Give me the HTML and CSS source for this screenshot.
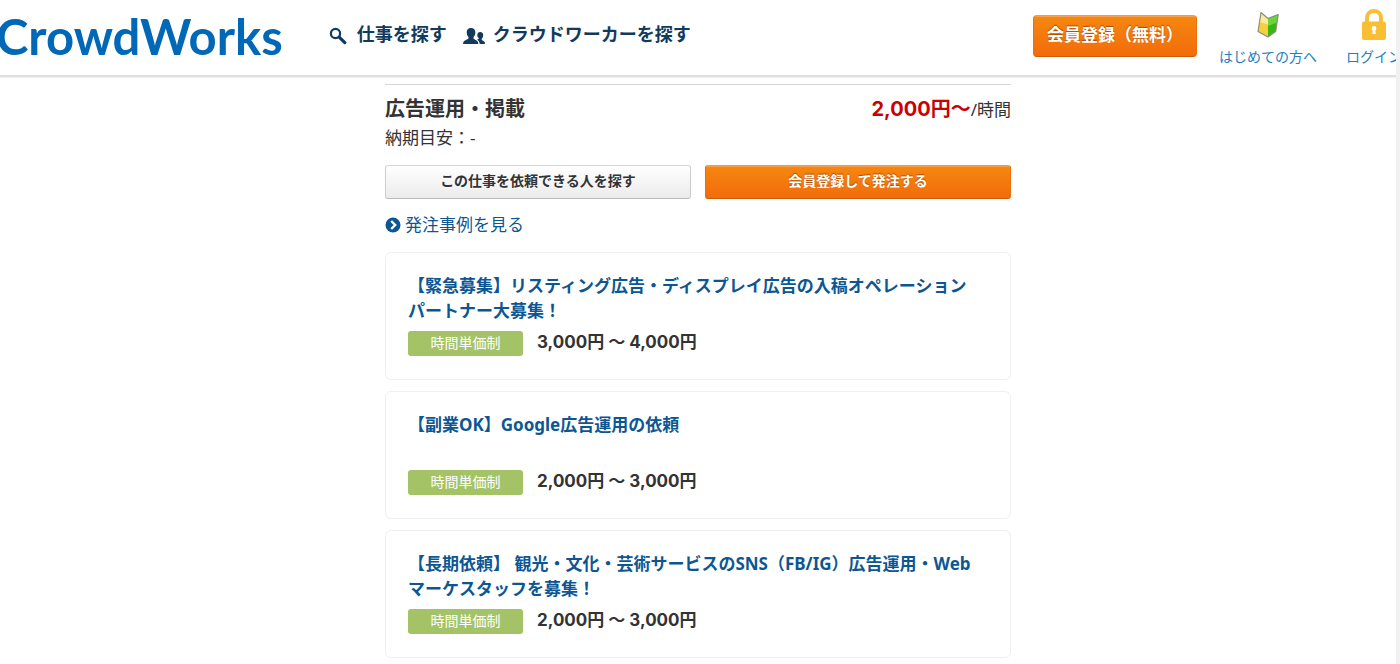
FILE: index.html
```html
<!DOCTYPE html>
<html lang="ja">
<head>
<meta charset="utf-8">
<title>CrowdWorks</title>
<link rel="stylesheet" href="styles.css">
</head>
<body>
<div class="page">
  <header class="header">
    <a class="logo" href="#">CrowdWorks</a>
    <nav class="nav">
      <a class="nav-link" href="#">
        <svg class="nav-search" viewBox="0 0 18 18" aria-hidden="true"><circle cx="6.5" cy="6.5" r="4.6" fill="none" stroke="currentColor" stroke-width="2.2"/><path d="M10.2 10.2l5.6 5.4" stroke="currentColor" stroke-width="3.2" stroke-linecap="round"/></svg>
        仕事を探す</a>
      <a class="nav-link" href="#">
        <svg class="nav-people" viewBox="0 0 22 16" aria-hidden="true"><path fill="currentColor" d="M8 0c2.900 0 4.300 1.700 4.300 4.300 0 2.300-.8 4-1.800 5v1.300c0 .8 4.200 1.500 4.800 4.400.1.600-.1 1-.7 1H.8c-.6 0-.8-.4-.7-1C.7 12.100 5.500 11.400 5.500 10.600V9.300c-1-1-1.800-2.700-1.800-5C3.700 1.700 5.100 0 8 0z"/><path fill="currentColor" d="M17.200 4c2 0 3 1.300 3 3.200 0 1.600-.6 2.800-1.500 3.500v1c0 .6 3 1 3.300 3.300 0 .6-.2 1-.7 1h-4.600c-.1-2.100-1.200-3.500-3-4.400.9-.2 2-.4 2-.9v-.6c-.8-.7-1.400-1.500-1.400-2.900 0-1.900.9-3.200 2.900-3.200z"/></svg>
        クラウドワーカーを探す</a>
    </nav>
    <div class="actions">
      <button class="btn btn-orange btn-signup" type="button">会員登録（無料）</button>
      <a class="action-link" href="#">
        <svg class="icon-guide" viewBox="0 0 24 28" aria-hidden="true">
          <path fill="#f6cf3c" d="M5 1.500L12 7.500v18.500L2 20.500z"/><path fill="#fbea9a" d="M5.200 2L12 7.500v6L3.700 11z"/>
          <path fill="#39b511" d="M12 7.500l10.200-4-2.500 17-7.700 5.500z"/><path fill="#67d63b" d="M12 7.500l10.200-4-1.200 8L12 15z"/>
          <path fill="none" stroke="#8d8d80" stroke-width="1.200" stroke-linejoin="round" d="M5 1.500L12 7.500l10.200-4-2.500 17-7.700 5.500-10-5.500z"/>
        </svg>
        はじめての方へ</a>
      <a class="action-link action-login" href="#">
        <svg class="icon-lock" viewBox="0 0 24 32" aria-hidden="true"><path fill="none" stroke="#f9be33" stroke-width="4" d="M5 14V9c0-9.200 14-9.200 14 0v5"/><rect y="12.500" width="24" height="18.500" rx="2" fill="#f9be33"/><circle cx="12" cy="19.500" r="2.400" fill="#fff"/><path fill="#fff" d="M11 20h2l.8 5h-3.600z"/></svg>
        ログイン</a>
    </div>
  </header>
  <main class="main">
    <div class="summary">
      <h1 class="title">広告運用・掲載</h1>
      <p class="rate"><strong class="rate-value">2,000円〜</strong>/時間</p>
    </div>
    <p class="deadline">納期目安：-</p>
    <div class="buttons">
      <button class="btn btn-grey" type="button">この仕事を依頼できる人を探す</button>
      <button class="btn btn-orange" type="button">会員登録して発注する</button>
    </div>
    <a class="cases" href="#">
      <svg class="icon-chevron" viewBox="0 0 16 16" aria-hidden="true"><circle cx="8" cy="8" r="7.500" fill="#0c5793"/><path d="M6.200 4l4 4-4 4" fill="none" stroke="#fff" stroke-width="2.400"/></svg>
      発注事例を見る</a>
    <ul class="jobs">
      <li class="job">
        <h2 class="job-title"><a href="#">【緊急募集】リスティング広告・ディスプレイ広告の入稿オペレーションパートナー大募集！</a></h2>
        <p class="job-price"><span class="tag">時間単価制</span>3,000円 〜 4,000円</p>
      </li>
      <li class="job">
        <h2 class="job-title"><a href="#">【副業OK】Google広告運用の依頼</a></h2>
        <p class="job-price"><span class="tag">時間単価制</span>2,000円 〜 3,000円</p>
      </li>
      <li class="job">
        <h2 class="job-title"><a href="#">【長期依頼】 観光・文化・芸術サービスのSNS（FB/IG）広告運用・Webマーケスタッフを募集！</a></h2>
        <p class="job-price"><span class="tag">時間単価制</span>2,000円 〜 3,000円</p>
      </li>
    </ul>
  </main>
</div>
</body>
</html>
```
FILE: styles.css
```css
* {
  box-sizing: border-box;
}

body {
  margin: 0;
  color: #333;
  background: #fff;
  font-family: "Noto Sans", "Noto Sans CJK JP", sans-serif;
  font-size: 17px;
  line-height: 25px;
}

h1, h2, p, ul {
  margin: 0;
  padding: 0;
}

a {
  color: #0c5793;
  text-decoration: none;
}

.page {
  min-height: 100vh;
  border-right: 4px solid #f1f1f1;
}

.header {
  display: flex;
  height: 77px;
  border-bottom: 2px solid #e0e0e0;
  box-shadow: 0 1px 1px #f0f0f0;
}

.logo {
  margin-left: -4px;
  padding-top: 6px;
  color: #0068b7;
  font-family: Lato, sans-serif;
  font-size: 49px;
  font-weight: 700;
  line-height: 60px;
}

.nav {
  display: flex;
  gap: 16px;
  margin-left: 46px;
  padding-top: 22px;
}

.nav-link {
  display: flex;
  align-items: center;
  height: 25px;
  color: #123a5c;
  font-size: 18px;
  font-weight: 700;
  white-space: nowrap;
}

.nav-search {
  width: 18px;
  height: 18px;
  margin: 2px 10px 0 0;
}

.nav-people {
  width: 22px;
  height: 16px;
  margin: 3px 8px 0 0;
}

.actions {
  display: flex;
  align-items: flex-start;
  margin-left: auto;
}

.btn {
  height: 34px;
  padding: 0 0 4px;
  border: 1px solid;
  border-radius: 3px;
  font-family: inherit;
  font-size: 14px;
  font-weight: 700;
  white-space: nowrap;
}

.btn-orange {
  color: #fff;
  background: linear-gradient(#f6870f, #f26c0b);
  border-color: #f09a48 #e8700f #cf5b08;
  box-shadow: inset 0 1px #f4a04c;
  text-shadow: 0 -1px 1px #a64d08;
}

.btn-grey {
  color: #333;
  background: linear-gradient(#fff, #ebebeb);
  border-color: #d6d6d6 #ccc #bbb;
  text-shadow: 0 1px 1px #fff;
}

.btn-signup {
  width: 164px;
  height: 42px;
  margin: 15px 22px 0 0;
  padding-bottom: 5px;
  border-radius: 4px;
  font-size: 17px;
}

.action-link {
  display: flex;
  flex-direction: column;
  align-items: center;
  padding-top: 9px;
  color: #2380bd;
  font-size: 14px;
  line-height: 20px;
  white-space: nowrap;
}

.action-login {
  width: 50px;
  margin-left: 29px;
  align-items: flex-start;
  overflow: hidden;
}

.icon-guide {
  width: 24px;
  height: 28px;
  margin: 2px 0 8px;
}

.icon-lock {
  width: 24px;
  height: 32px;
  margin: 0 0 6px 16px;
}

.main {
  width: 626px;
  max-width: 100%;
  margin: 7px auto 0;
}

.summary {
  display: flex;
  align-items: baseline;
  justify-content: space-between;
  padding-top: 9px;
  border-top: 1px solid #d5d5d5;
}

.title {
  font-size: 20px;
  line-height: 30px;
}

.rate-value {
  color: #c00;
  font-family: Inter, "Noto Sans CJK JP", sans-serif;
  font-size: 20px;
}

.deadline {
  margin-top: 1px;
}

.buttons {
  display: grid;
  grid-template-columns: 1fr 1fr;
  gap: 14px;
  margin-top: 15px;
}

.cases {
  display: flex;
  align-items: center;
  gap: 4px;
  margin: 13px 0 15px;
}

.icon-chevron {
  width: 16px;
  height: 16px;
}

.jobs {
  display: grid;
  gap: 11px;
  list-style: none;
}

.job {
  min-height: 128px;
  padding: 20px 30px 20px 22px;
  border: 1px solid #f0f0f0;
  border-radius: 6px;
}

.job-title {
  min-height: 50px;
  font-size: 17px;
}

.job-price {
  display: flex;
  gap: 14px;
  margin-top: 8px;
  font-family: Inter, "Noto Sans CJK JP", sans-serif;
  font-weight: 700;
  line-height: 23px;
}

.tag {
  width: 115px;
  height: 25px;
  border-radius: 3px;
  color: #fff;
  background: #a4c366;
  font-size: 14px;
  font-weight: 400;
  text-align: center;
}
```
